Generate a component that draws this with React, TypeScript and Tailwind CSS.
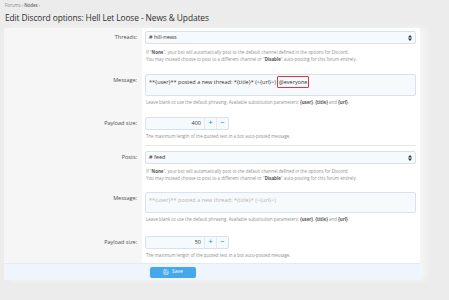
import { Save } from 'lucide-react'

function SelectBox({ value }: { value: string }) {
  return (
    <div className="flex h-[13px] items-center justify-between rounded-[2px] border border-[#d8e2ec] bg-[#f7fafd] pl-[3px] pr-[3px] text-[5.5px] text-[#333]">
      <span>{value}</span>
      <svg width="4" height="6" viewBox="0 0 4 6">
        <path d="M2 0 L4 2.4 H0 Z" fill="#333" />
        <path d="M2 6 L4 3.6 H0 Z" fill="#333" />
      </svg>
    </div>
  )
}

function NumberBox({ value }: { value: string }) {
  return (
    <div className="flex h-[13px] w-[84px] items-stretch rounded-[2px] border border-[#d8e2ec] bg-[#f7fafd] text-[5.5px]">
      <div className="flex w-[58px] items-center justify-end pr-[3px] text-[#333]">{value}</div>
      <div className="flex w-[12px] items-center justify-center border-l border-[#e3eaf2] text-[7px] font-bold text-[#47a7eb]">+</div>
      <div className="flex w-[12px] items-center justify-center border-l border-[#e3eaf2] text-[7px] font-bold text-[#47a7eb]">−</div>
    </div>
  )
}

function Row({
  label,
  children,
  className = '',
}: {
  label: string
  children: React.ReactNode
  className?: string
}) {
  return (
    <div className="flex">
      <div className="w-[138px] shrink-0 bg-[#f6f6f6] pr-[5px] pt-[3px] text-right text-[5.5px] leading-[13px] text-[#505050]">
        {label}
      </div>
      <div className={`flex-1 pl-[3px] pr-[4px] ${className}`}>{children}</div>
    </div>
  )
}

const explain = 'text-[4.4px] leading-[7px] text-[#8f8f8f]'

export default function App() {
  return (
    <div
      className="h-[300px] w-[449px] overflow-hidden bg-[#ececec]"
      style={{ fontFamily: '"Open Sans", "Noto Sans", sans-serif' }}
    >
      <div className="px-[5px] pt-[2px]">
        <div className="text-[4.4px] leading-[7px] text-[#8a8a8a]">
          Forums › <span className="font-semibold text-[#666]">Nodes</span> ›
        </div>
        <h1 className="mt-[2px] text-[8.4px] leading-[14px] tracking-[-0.1px] text-[#2f2f2f]">
          Edit Discord options: Hell Let Loose - News &amp; Updates
        </h1>
      </div>

      <div className="ml-[4px] mt-[3px] w-[416px] bg-white shadow-[6px_0_6px_rgba(255,255,255,0.5)]">
        <Row label="Threads:" className="pt-[3px] pb-[8px]">
          <SelectBox value="# hill-news" />
          <div className={`${explain} mt-[5px] pl-[1px]`}>
            <div>
              If "<b className="text-[#555]">None</b>", your bot will automatically post to the default channel defined in the options for Discord.
            </div>
            <div>
              You may instead choose to post to a different channel or "<b className="text-[#555]">Disable</b>" auto-posting for this forum entirely.
            </div>
          </div>
        </Row>

        <Row label="Message:" className="pt-[3px] pb-[8px]">
          <div className="h-[22px] rounded-[2px] border border-[#d8e2ec] bg-[#f7fafd] pl-[3px] pt-[2px] text-[5.5px] leading-[10px] text-[#333]">
            **{'{user}'}** posted a new thread: *{'{title}'}* (&lt;{'{url}'}&gt;){' '}
            <span className="rounded-[1px] border-[1.5px] border-[#d63a3c] px-[0.5px] py-[1px]">@everyone</span>
          </div>
          <div className={`${explain} mt-[3px] pl-[1px]`}>
            Leave blank to use the default phrasing. Available substitution parameters: <b className="text-[#555]">{'{user}'}</b>,{' '}
            <b className="text-[#555]">{'{title}'}</b> and <b className="text-[#555]">{'{url}'}</b>.
          </div>
        </Row>

        <Row label="Payload size:" className="pt-[3px]">
          <div className="border-b border-[#e7e7e7] pb-[5px]">
            <NumberBox value="400" />
            <div className={`${explain} mt-[3px] pl-[1px]`}>
              The maximum length of the quoted text in a bot auto-posted message.
            </div>
          </div>
        </Row>

        <div className="flex">
          <div className="w-[138px] shrink-0 bg-[#f6f6f6] pr-[5px] pt-[5px] text-right text-[5.5px] leading-[13px] text-[#505050]">
            Posts:
          </div>
          <div className="flex-1 pl-[3px] pr-[4px] pt-[5px] pb-[7px]">
            <SelectBox value="# feed" />
            <div className={`${explain} mt-[4px] pl-[1px]`}>
              <div>
                If "<b className="text-[#555]">None</b>", your bot will automatically post to the default channel defined in the options for Discord.
              </div>
              <div>
                You may instead choose to post to a different channel or "<b className="text-[#555]">Disable</b>" auto-posting for this forum entirely.
              </div>
            </div>
          </div>
        </div>

        <Row label="Message:" className="pt-[3px] pb-[10px]">
          <div className="h-[21px] rounded-[2px] border border-[#d8e2ec] bg-[#f7fafd] pl-[3px] pt-[2px] text-[5.5px] leading-[10px] text-[#b5b5b5]">
            **{'{user}'}** posted a new thread: *{'{title}'}* (&lt;{'{url}'}&gt;)
          </div>
          <div className={`${explain} mt-[3px] pl-[1px]`}>
            Leave blank to use the default phrasing. Available substitution parameters: <b className="text-[#555]">{'{user}'}</b>,{' '}
            <b className="text-[#555]">{'{title}'}</b> and <b className="text-[#555]">{'{url}'}</b>.
          </div>
        </Row>

        <Row label="Payload size:" className="pt-[3px] pb-[4px]">
          <NumberBox value="50" />
          <div className={`${explain} mt-[3px] pl-[1px]`}>
            The maximum length of the quoted text in a bot auto-posted message.
          </div>
        </Row>

        <div className="flex h-[17px] items-center border-t border-[#e3ebf4] bg-[#eef5fc] pl-[142px]">
          <button className="ml-[4px] flex h-[11px] w-[46px] items-center justify-center gap-[3px] rounded-[2px] bg-[#47a7eb] text-[5px] text-white">
            <Save size={6} strokeWidth={2} />
            Save
          </button>
        </div>
      </div>
    </div>
  )
}
